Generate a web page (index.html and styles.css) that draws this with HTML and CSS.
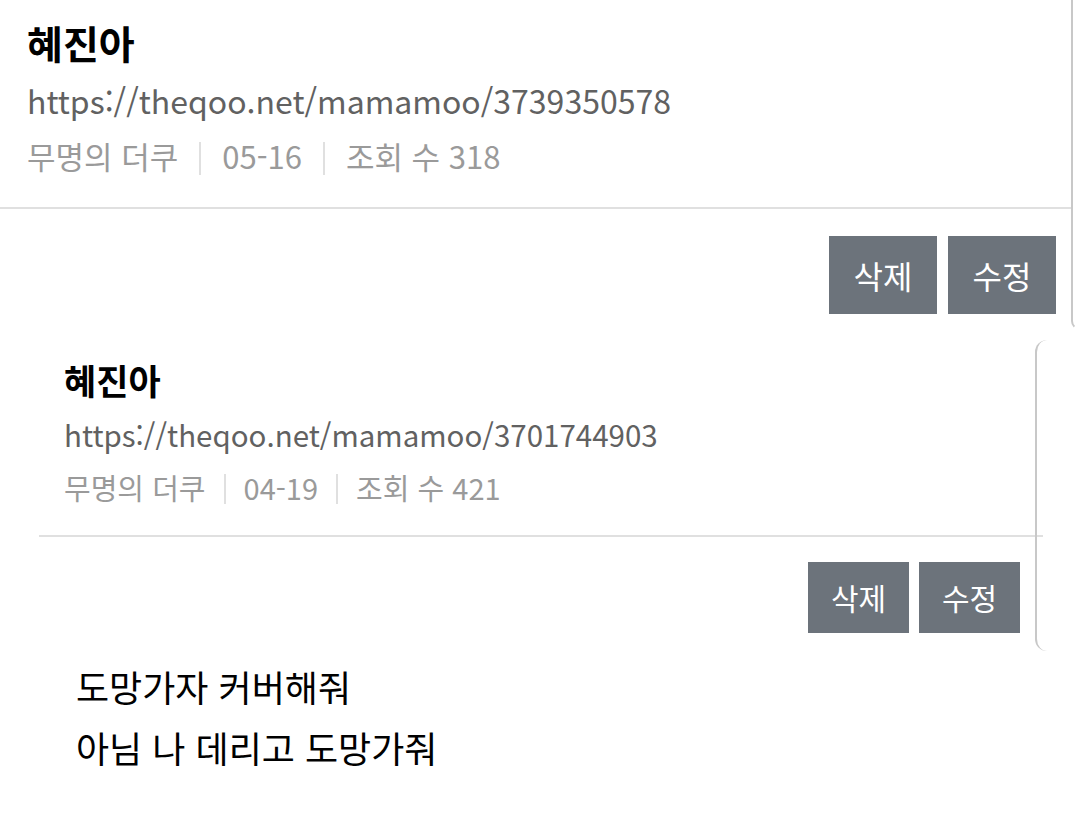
FILE: index.html
```html
<!DOCTYPE html>
<html lang="ko">
<head>
<meta charset="utf-8">
<link rel="stylesheet" href="styles.css">
</head>
<body>
<section class="post">
  <div class="post-main">
    <header class="post-head">
      <h1 class="title">혜진아</h1>
      <div class="url">https://theqoo.net/mamamoo/3739350578</div>
      <div class="meta"><span>무명의 더쿠</span><i class="sep"></i><span>05-16</span><i class="sep"></i><span>조회 수 318</span></div>
    </header>
    <div class="actions">
      <button class="btn">삭제</button>
      <button class="btn">수정</button>
    </div>
  </div>
  <div class="side side-top"></div>
</section>

<section class="reply">
  <div class="reply-main">
    <header class="reply-head">
      <h2 class="title small">혜진아</h2>
      <div class="url small">https://theqoo.net/mamamoo/3701744903</div>
      <div class="meta small"><span>무명의 더쿠</span><i class="sep"></i><span>04-19</span><i class="sep"></i><span>조회 수 421</span></div>
    </header>
    <div class="actions small">
      <button class="btn small">삭제</button>
      <button class="btn small">수정</button>
    </div>
  </div>
  <div class="side side-reply"></div>
</section>

<div class="body-text">
  <p>도망가자 커버해줘</p>
  <p>아님 나 데리고 도망가줘</p>
</div>
</body>
</html>
```

FILE: styles.css
```css
* { box-sizing: border-box; }
html, body {
  margin: 0;
  padding: 0;
  background: #fff;
  font-family: "Noto Sans CJK KR", "Noto Sans", sans-serif;
  color: #111;
  overflow: hidden;
}

.post {
  display: flex;
  height: 330px;
}
.post-main {
  flex: none;
  width: 1071px;
  display: flex;
  flex-direction: column;
}
.post-head {
  padding: 16px 0 0 27px;
  height: 209px;
  border-bottom: 2px solid #e0e0e0;
}
.title {
  margin: 0;
  font-size: 39px;
  line-height: 52px;
  font-weight: 700;
  color: #000;
}
.url {
  font-size: 32px;
  line-height: 46px;
  color: #616161;
  margin-top: 9px;
}
.meta {
  display: flex;
  align-items: center;
  font-size: 31px;
  line-height: 46px;
  color: #9a9a9a;
  margin-top: 10px;
}
.sep {
  display: block;
  width: 2px;
  height: 33px;
  background: #e0e0e0;
  margin: 4px 21px 0;
}
.actions {
  display: flex;
  justify-content: flex-end;
  gap: 11px;
  padding: 27px 15px 0 0;
}
.btn {
  width: 108px;
  height: 78px;
  border: 0;
  margin: 0;
  padding: 0;
  background: #6c737b;
  color: #fff;
  font-family: inherit;
  font-size: 32px;
  line-height: 78px;
}

.side {
  flex: 1;
  border-left: 2px solid #c8c8c8;
}
.side-top {
  border-bottom: 2px solid transparent;
  border-bottom-left-radius: 12px;
}

.reply {
  display: flex;
  margin-top: 10px;
  height: 311px;
}
.reply-main {
  flex: none;
  width: 996px;
  margin-left: 39px;
  display: flex;
  flex-direction: column;
}
.reply-head {
  padding: 16px 0 0 25px;
  height: 197px;
  border-bottom: 2px solid #e0e0e0;
  margin-right: -8px;
}
.title.small {
  font-size: 35px;
  line-height: 48px;
}
.url.small {
  font-size: 29.5px;
  line-height: 42px;
  margin-top: 9px;
}
.meta.small {
  font-size: 29px;
  line-height: 42px;
  margin-top: 11px;
}
.meta.small .sep {
  height: 30px;
  margin: 4px 18px 0;
}
.actions.small {
  gap: 10px;
  padding: 25px 15px 0 0;
}
.btn.small {
  width: 101px;
  height: 71px;
  font-size: 30px;
  line-height: 71px;
}
.side-reply {
  border-radius: 12px 0 0 12px;
}

.body-text {
  margin: 5px 0 0 76px;
}
.body-text p {
  margin: 0;
  font-size: 36px;
  line-height: 61px;
  color: #000;
}
```
